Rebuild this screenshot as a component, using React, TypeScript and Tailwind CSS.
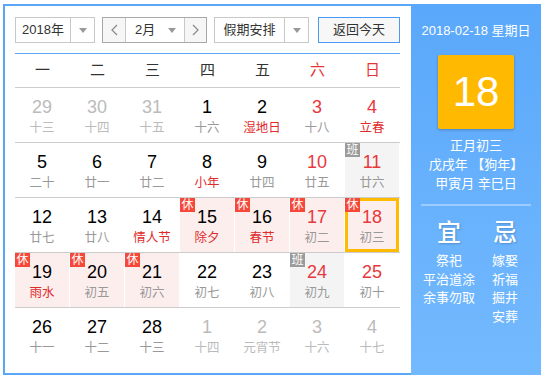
import React from "react";

type Cell = {
  d: number;
  l: string;
  other?: boolean;
  red?: boolean;
  lred?: boolean;
  badge?: "休" | "班";
  today?: boolean;
};

const rows: Cell[][] = [
  [
    { d: 29, l: "十三", other: true },
    { d: 30, l: "十四", other: true },
    { d: 31, l: "十五", other: true },
    { d: 1, l: "十六" },
    { d: 2, l: "湿地日", lred: true },
    { d: 3, l: "十八", red: true },
    { d: 4, l: "立春", red: true, lred: true },
  ],
  [
    { d: 5, l: "二十" },
    { d: 6, l: "廿一" },
    { d: 7, l: "廿二" },
    { d: 8, l: "小年", lred: true },
    { d: 9, l: "廿四" },
    { d: 10, l: "廿五", red: true },
    { d: 11, l: "廿六", red: true, badge: "班" },
  ],
  [
    { d: 12, l: "廿七" },
    { d: 13, l: "廿八" },
    { d: 14, l: "情人节", lred: true },
    { d: 15, l: "除夕", lred: true, badge: "休" },
    { d: 16, l: "春节", lred: true, badge: "休" },
    { d: 17, l: "初二", red: true, badge: "休" },
    { d: 18, l: "初三", red: true, badge: "休", today: true },
  ],
  [
    { d: 19, l: "雨水", lred: true, badge: "休" },
    { d: 20, l: "初五", badge: "休" },
    { d: 21, l: "初六", badge: "休" },
    { d: 22, l: "初七" },
    { d: 23, l: "初八" },
    { d: 24, l: "初九", red: true, badge: "班" },
    { d: 25, l: "初十", red: true },
  ],
  [
    { d: 26, l: "十一" },
    { d: 27, l: "十二" },
    { d: 28, l: "十三" },
    { d: 1, l: "十四", other: true },
    { d: 2, l: "元宵节", other: true },
    { d: 3, l: "十六", other: true },
    { d: 4, l: "十七", other: true },
  ],
];

const weekdays = ["一", "二", "三", "四", "五", "六", "日"];

const Caret = () => (
  <span className="w-0 h-0 border-x-[4px] border-x-transparent border-t-[5px] border-t-[#999]" />
);

const DayCell: React.FC<{ c: Cell }> = ({ c }) => {
  const bg =
    c.badge === "休" ? "bg-[#fdeeee]" : c.badge === "班" ? "bg-[#f4f4f4]" : "";
  const numColor = c.other ? "text-[#bbb]" : c.red ? "text-[#e8383d]" : "text-black";
  const lunarColor = c.other ? "text-[#bbb]" : c.lred ? "text-[#e02b2b]" : "text-[#999]";

  return (
    <div className="h-[54px] pr-[1px]">
      <div
        className={`relative h-full flex flex-col items-center ${bg} ${
          c.today ? "border-[3px] border-[#ffbb00] h-[53px]" : ""
        }`}
      >
        {c.badge && (
          <span
            className={`absolute ${c.today ? "-left-[3px] -top-[3px]" : "left-0 top-0"} w-[15px] h-[14px] text-[12px] leading-[14px] text-white text-center ${
              c.badge === "休" ? "bg-[#f6483a]" : "bg-[#9b9b9b]"
            }`}
          >
            {c.badge}
          </span>
        )}
        <span className={`${c.today ? "mt-[6px]" : "mt-[9px]"} text-[18px] leading-[20px] ${numColor}`}>
          {c.d}
        </span>
        <span className={`mt-[3px] text-[12.5px] leading-[16px] ${lunarColor}`}>{c.l}</span>
      </div>
    </div>
  );
};

export default function App() {
  return (
    <div className="pt-[4px] pl-[3px] font-['Liberation_Sans','Noto_Sans_CJK_SC',sans-serif]">
      <div className="flex w-[538px] h-[371px]">
        {/* Calendar */}
        <div className="w-[408px] border-l-2 border-t-2 border-b-2 border-[#5aa6f7] pl-[10px] pr-[11px] pt-[11px] bg-white">
          {/* Controls */}
          <div className="flex h-[26px] text-[13px] text-[#333]">
            <div className="w-[80px] flex border border-[#c8c8c8]">
              <div className="flex-1 flex items-center justify-center">2018年</div>
              <div className="w-[24px] border-l border-[#c8c8c8] flex items-center justify-center">
                <Caret />
              </div>
            </div>
            <div className="ml-[7px] w-[105px] flex border border-[#a8a8a8]">
              <div className="w-[23px] border-r border-[#c8c8c8] bg-[#f6f6f6] flex items-center justify-center">
                <svg width="7" height="12" viewBox="0 0 7 12">
                  <polyline points="6,1 1,6 6,11" fill="none" stroke="#888" strokeWidth="1.2" />
                </svg>
              </div>
              <div className="flex-1 flex items-center justify-between pl-[9px] pr-[8px]">
                <span>2月</span>
                <Caret />
              </div>
              <div className="w-[22px] border-l border-[#c8c8c8] bg-[#f6f6f6] flex items-center justify-center">
                <svg width="7" height="12" viewBox="0 0 7 12">
                  <polyline points="1,1 6,6 1,11" fill="none" stroke="#888" strokeWidth="1.2" />
                </svg>
              </div>
            </div>
            <div className="ml-[7px] w-[95px] flex border border-[#c8c8c8]">
              <div className="flex-1 flex items-center justify-center">假期安排</div>
              <div className="w-[24px] border-l border-[#c8c8c8] flex items-center justify-center">
                <Caret />
              </div>
            </div>
            <button className="ml-[9px] w-[82px] border border-[#4a9af5] bg-[#f7f7f7] flex items-center justify-center">
              返回今天
            </button>
          </div>

          <div className="mt-[10px] h-[1px] bg-[#5aa6f7]" />

          {/* Weekdays */}
          <div className="grid grid-cols-7 h-[33px] items-center text-[15px]">
            {weekdays.map((w, i) => (
              <div key={w} className={`text-center ${i >= 5 ? "text-[#e33535]" : "text-[#333]"}`}>
                {w}
              </div>
            ))}
          </div>

          {/* Days */}
          {rows.map((row, ri) => (
            <div key={ri} className="grid grid-cols-7 border-t border-[#cccccc]">
              {row.map((c, ci) => (
                <DayCell key={ci} c={c} />
              ))}
            </div>
          ))}
        </div>

        {/* Side panel */}
        <div className="w-[130px] h-full flex flex-col items-center bg-gradient-to-b from-[#5aa8fb] to-[#73b9fe] text-white text-[13px]">
          <div className="mt-[18px] leading-[18px]">2018-02-18 星期日</div>
          <div className="mt-[15px] w-[76px] h-[74px] rounded-[2px] bg-[#ffb900] shadow-[0_1px_3px_rgba(0,0,0,0.25)] flex items-center justify-center text-[42px] leading-none">
            18
          </div>
          <div className="mt-[7px] leading-[19px] text-center">
            <div>正月初三</div>
            <div>戊戌年 【狗年】</div>
            <div>甲寅月 辛巳日</div>
          </div>
          <div className="mt-[11px] w-[110px] h-[2px] bg-white/35" />
          <div className="mt-[13px] w-full pl-[10px] flex">
            <div className="w-[56px] flex flex-col items-center">
              <div className="text-[24px] leading-[28px] font-medium [text-shadow:1px_1px_2px_rgba(0,0,0,0.2)]">宜</div>
              <div className="mt-[5px] leading-[18.5px] text-center">
                <div>祭祀</div>
                <div>平治道涂</div>
                <div>余事勿取</div>
              </div>
            </div>
            <div className="w-[56px] flex flex-col items-center">
              <div className="text-[24px] leading-[28px] font-medium [text-shadow:1px_1px_2px_rgba(0,0,0,0.2)]">忌</div>
              <div className="mt-[5px] leading-[18.5px] text-center">
                <div>嫁娶</div>
                <div>祈福</div>
                <div>掘井</div>
                <div>安葬</div>
              </div>
            </div>
          </div>
        </div>
      </div>
    </div>
  );
}
